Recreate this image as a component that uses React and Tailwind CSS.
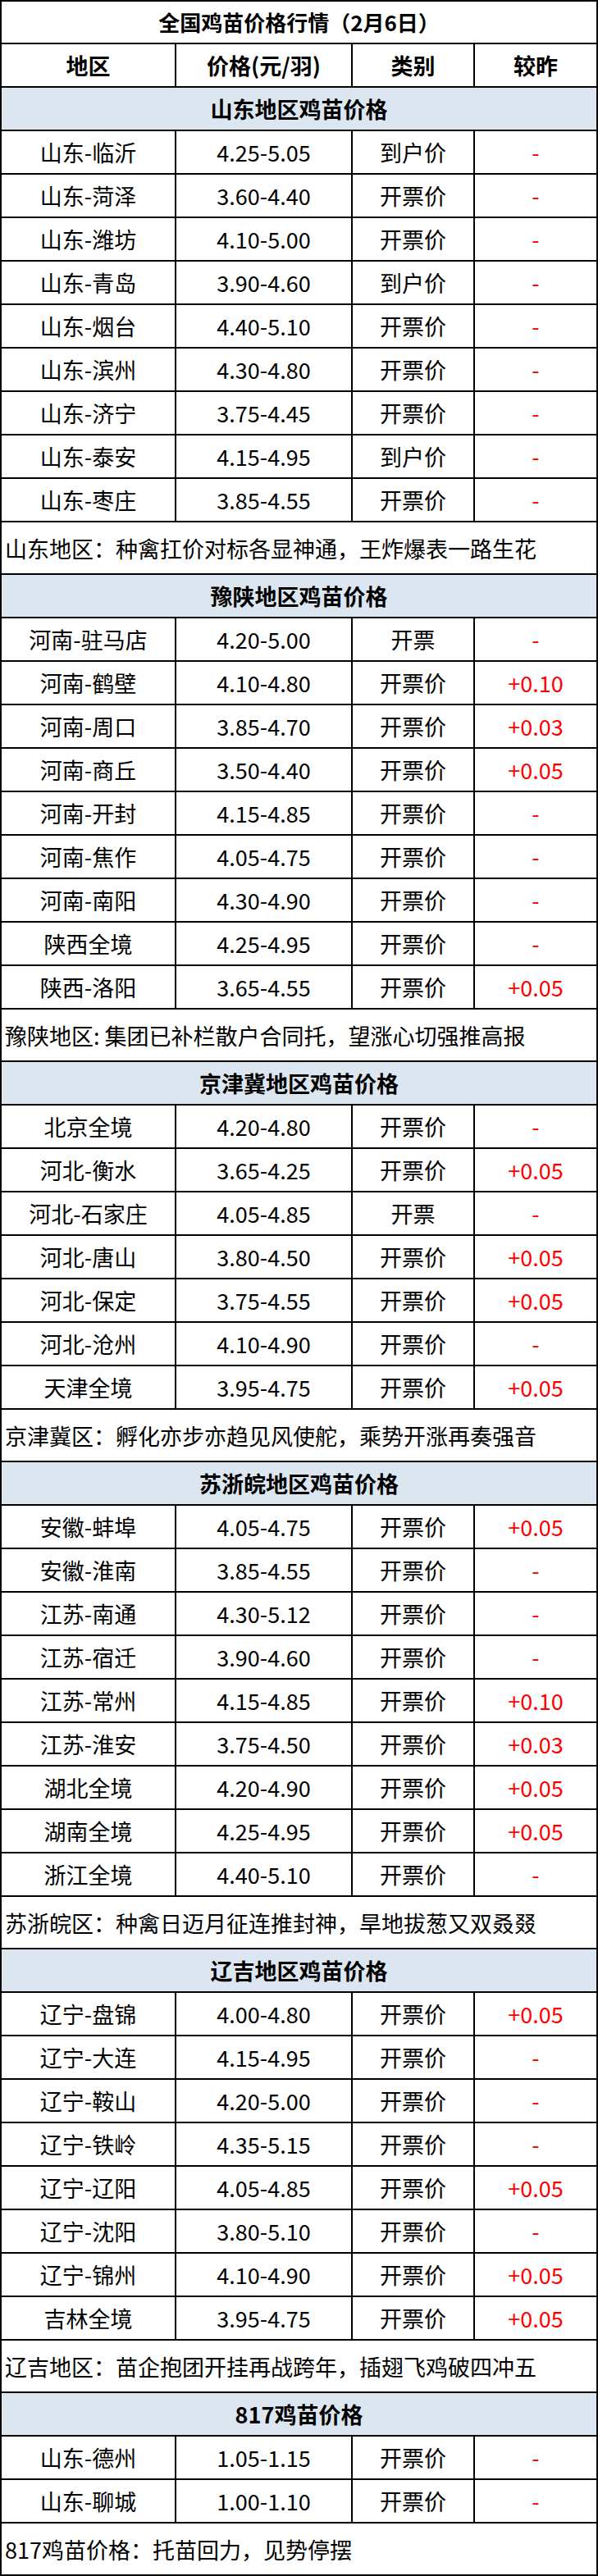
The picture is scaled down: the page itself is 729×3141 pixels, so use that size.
import React from "react";

const sections = [
  {
    name: "山东地区鸡苗价格",
    rows: [
      ["山东-临沂", "4.25-5.05", "到户价", "-"],
      ["山东-菏泽", "3.60-4.40", "开票价", "-"],
      ["山东-潍坊", "4.10-5.00", "开票价", "-"],
      ["山东-青岛", "3.90-4.60", "到户价", "-"],
      ["山东-烟台", "4.40-5.10", "开票价", "-"],
      ["山东-滨州", "4.30-4.80", "开票价", "-"],
      ["山东-济宁", "3.75-4.45", "开票价", "-"],
      ["山东-泰安", "4.15-4.95", "到户价", "-"],
      ["山东-枣庄", "3.85-4.55", "开票价", "-"],
    ],
    note: "山东地区：种禽扛价对标各显神通，王炸爆表一路生花",
  },
  {
    name: "豫陕地区鸡苗价格",
    rows: [
      ["河南-驻马店", "4.20-5.00", "开票", "-"],
      ["河南-鹤壁", "4.10-4.80", "开票价", "+0.10"],
      ["河南-周口", "3.85-4.70", "开票价", "+0.03"],
      ["河南-商丘", "3.50-4.40", "开票价", "+0.05"],
      ["河南-开封", "4.15-4.85", "开票价", "-"],
      ["河南-焦作", "4.05-4.75", "开票价", "-"],
      ["河南-南阳", "4.30-4.90", "开票价", "-"],
      ["陕西全境", "4.25-4.95", "开票价", "-"],
      ["陕西-洛阳", "3.65-4.55", "开票价", "+0.05"],
    ],
    note: "豫陕地区: 集团已补栏散户合同托，望涨心切强推高报",
  },
  {
    name: "京津冀地区鸡苗价格",
    rows: [
      ["北京全境", "4.20-4.80", "开票价", "-"],
      ["河北-衡水", "3.65-4.25", "开票价", "+0.05"],
      ["河北-石家庄", "4.05-4.85", "开票", "-"],
      ["河北-唐山", "3.80-4.50", "开票价", "+0.05"],
      ["河北-保定", "3.75-4.55", "开票价", "+0.05"],
      ["河北-沧州", "4.10-4.90", "开票价", "-"],
      ["天津全境", "3.95-4.75", "开票价", "+0.05"],
    ],
    note: "京津冀区：孵化亦步亦趋见风使舵，乘势开涨再奏强音",
  },
  {
    name: "苏浙皖地区鸡苗价格",
    rows: [
      ["安徽-蚌埠", "4.05-4.75", "开票价", "+0.05"],
      ["安徽-淮南", "3.85-4.55", "开票价", "-"],
      ["江苏-南通", "4.30-5.12", "开票价", "-"],
      ["江苏-宿迁", "3.90-4.60", "开票价", "-"],
      ["江苏-常州", "4.15-4.85", "开票价", "+0.10"],
      ["江苏-淮安", "3.75-4.50", "开票价", "+0.03"],
      ["湖北全境", "4.20-4.90", "开票价", "+0.05"],
      ["湖南全境", "4.25-4.95", "开票价", "+0.05"],
      ["浙江全境", "4.40-5.10", "开票价", "-"],
    ],
    note: "苏浙皖区：种禽日迈月征连推封神，旱地拔葱又双叒叕",
  },
  {
    name: "辽吉地区鸡苗价格",
    rows: [
      ["辽宁-盘锦", "4.00-4.80", "开票价", "+0.05"],
      ["辽宁-大连", "4.15-4.95", "开票价", "-"],
      ["辽宁-鞍山", "4.20-5.00", "开票价", "-"],
      ["辽宁-铁岭", "4.35-5.15", "开票价", "-"],
      ["辽宁-辽阳", "4.05-4.85", "开票价", "+0.05"],
      ["辽宁-沈阳", "3.80-5.10", "开票价", "-"],
      ["辽宁-锦州", "4.10-4.90", "开票价", "+0.05"],
      ["吉林全境", "3.95-4.75", "开票价", "+0.05"],
    ],
    note: "辽吉地区：苗企抱团开挂再战跨年，插翅飞鸡破四冲五",
  },
  {
    name: "817鸡苗价格",
    rows: [
      ["山东-德州", "1.05-1.15", "开票价", "-"],
      ["山东-聊城", "1.00-1.10", "开票价", "-"],
    ],
    note: "817鸡苗价格：托苗回力，见势停摆",
  },
];

function Row({ cells, bold }) {
  return (
    <div className={"flex h-[53px] border-b-2 border-black text-[27px] " + (bold ? "font-bold" : "")}>
      <div className="w-[213px] border-r-2 border-black flex items-center justify-center">{cells[0]}</div>
      <div className="w-[215px] border-r-2 border-black flex items-center justify-center">{cells[1]}</div>
      <div className="w-[149px] border-r-2 border-black flex items-center justify-center">{cells[2]}</div>
      <div className={"flex-1 flex items-center justify-center " + (bold ? "" : "text-[#ff0000]")}>{cells[3]}</div>
    </div>
  );
}

export default function App() {
  return (
    <div className="w-[729px] bg-white border-2 border-black text-black font-['Noto_Sans_CJK_SC','Microsoft_YaHei',sans-serif] leading-none">
      <div className="h-[52px] border-b-2 border-black flex items-center justify-center text-[26px] font-bold">
        全国鸡苗价格行情（2月6日）
      </div>
      <Row cells={["地区", "价格(元/羽)", "类别", "较昨"]} bold />
      {sections.map((s, i) => (
        <div key={s.name}>
          <div className="h-[53px] border-b-2 border-black bg-[#dce6f1] flex items-center justify-center text-[27px] font-bold">
            {s.name}
          </div>
          {s.rows.map((r) => (
            <Row key={r[0]} cells={r} />
          ))}
          <div
            className={
              "flex items-center pl-1 text-[27px] " +
              (i === sections.length - 1 ? "h-[62px]" : "h-[64px] border-b-2 border-black")
            }
          >
            {s.note}
          </div>
        </div>
      ))}
    </div>
  );
}
